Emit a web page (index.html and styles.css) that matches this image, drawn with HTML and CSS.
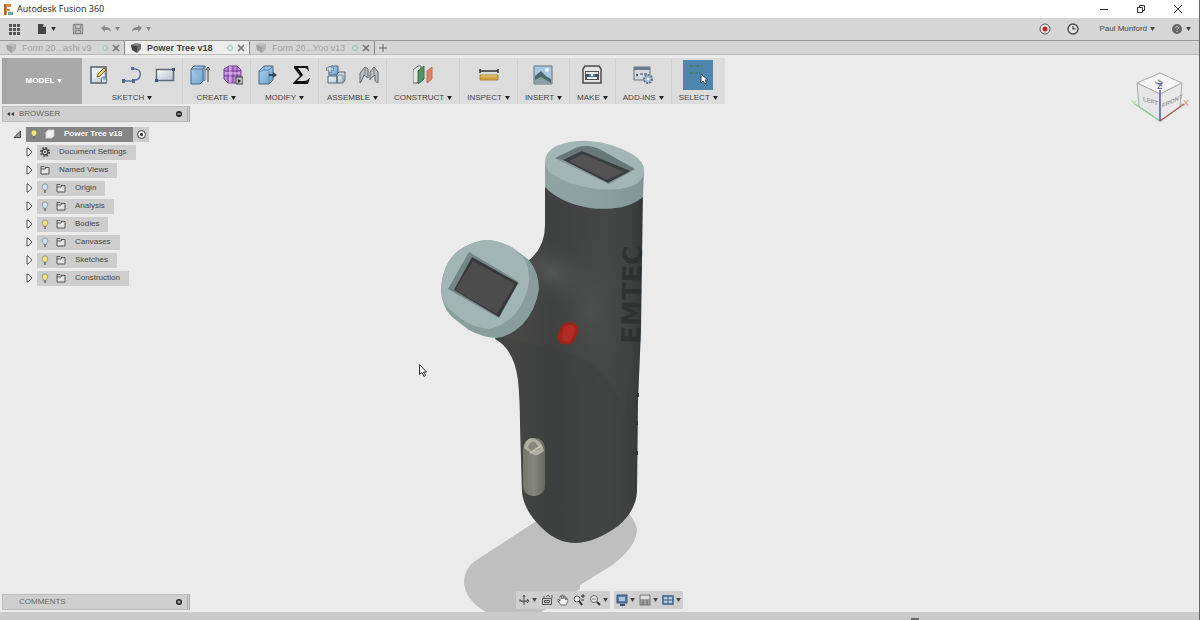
FILE: index.html
```html
<!DOCTYPE html>
<html lang="en">
<head>
    <meta charset="UTF-8">
    <meta name="viewport" content="width=device-width, initial-scale=1.0">
    <title>Autodesk Fusion 360</title>
    <link rel="stylesheet" href="styles.css">
</head>
<body>
    <!-- Shared icons -->
    <svg class="sprite" aria-hidden="true">
        <defs>
            <linearGradient id="blueFace" x1="0" y1="0" x2="1" y2="1">
                <stop offset="0" stop-color="#b3d3ee"/>
                <stop offset="1" stop-color="#6c9fcd"/>
            </linearGradient>
            <linearGradient id="paleFace" x1="0" y1="0" x2="1" y2="1">
                <stop offset="0" stop-color="#fafcfd"/>
                <stop offset="1" stop-color="#b4c0cb"/>
            </linearGradient>
        </defs>
        <symbol id="caret" viewBox="0 0 6 5"><path d="M0 0h6L3 5z" fill="currentColor"/></symbol>
        <symbol id="doc-cube" viewBox="0 0 12 12">
            <path d="M1 3l5-2 5 1v5L7 11 2 8z" fill="currentColor"/>
            <path d="M1 3l6 1 4-2-5-1z" fill="#fff" opacity=".35"/>
            <path d="M7 4v7l4-4V2z" fill="#fff" opacity=".2"/>
        </symbol>
        <symbol id="close" viewBox="0 0 8 8"><path d="M1 1l6 6M7 1L1 7" stroke="currentColor" stroke-width="1.700"/></symbol>
        <symbol id="arrow" viewBox="0 0 12 10"><path d="M1 4l4-3v2c4 0 6 2 6 5-1-2-3-2-6-2v2z" fill="currentColor"/></symbol>
        <symbol id="expander" viewBox="0 0 8 10"><path d="M2 1h1l4 4-4 4H2z" fill="#f6f6f6" stroke="#555"/></symbol>
        <symbol id="bulb" viewBox="1 0 8 11">
            <path d="M5 1a3 3 0 0 0-3 3c0 2 1 2 1.500 4h3C7 6 8 6 8 4a3 3 0 0 0-3-3z" fill="currentColor" stroke="#777" stroke-width=".7"/>
            <path d="M4 8.500h2M4 10h2" stroke="#666" stroke-width="1.200"/>
        </symbol>
        <symbol id="folder" viewBox="1 1 9 10"><path d="M1.500 10v-7.500h3l1 1h4V10zM1.500 5h4l1-1.500" fill="#e4e4e4" stroke="#555"/></symbol>
        <symbol id="pin" viewBox="0 0 8 8"><circle cx="4" cy="4" r="3" fill="#222"/><path d="M2.500 4h3" stroke="#ddd" stroke-width="1.200"/></symbol>
    </svg>

    <header class="titlebar">
        <svg class="logo" viewBox="0 0 12 13"><path d="M2 1h7v3H5v2h3v2H5v4H2z" fill="#e38b3c"/><path d="M2 1v11h2V1z" fill="#a9672e"/><path d="M6 9h5v3H6z" fill="#62a2ad"/></svg>
        <h1>Autodesk Fusion 360</h1>
        <div class="window-buttons">
            <button type="button" aria-label="Minimize"><svg viewBox="0 0 10 10"><path d="M1 5.500h8" stroke="#333"/></svg></button>
            <button type="button" aria-label="Restore"><svg viewBox="0 0 10 10"><path d="M1.500 3.500h5v5h-5zM3.500 3V1.500h5v5H7" fill="none" stroke="#333"/></svg></button>
            <button type="button" aria-label="Close"><svg viewBox="0 0 10 10"><path d="M1 1l8 8M9 1L1 9" stroke="#333"/></svg></button>
        </div>
    </header>

    <div class="quickbar">
        <button type="button" class="data-panel" aria-label="Data panel"><svg class="icon-12" viewBox="0 0 12 12"><path d="M1 1h3v3H1zM5 1h3v3H5zM9 1h3v3H9zM1 5h3v3H1zM5 5h3v3H5zM9 5h3v3H9zM1 9h3v3H1zM5 9h3v3H5zM9 9h3v3H9z" fill="#555"/></svg></button>
        <button type="button" class="file" aria-label="File"><svg class="icon-12" viewBox="0 0 12 12"><path d="M2 1h5l3 3v7H2z" fill="#444"/><path d="M7 1v3h3" fill="#bbb"/></svg><svg class="caret"><use href="#caret"/></svg></button>
        <button type="button" class="save" aria-label="Save"><svg class="icon-12" viewBox="0 0 12 12"><path d="M1.500 1.500h9v9h-9zM3.500 1.500v4h5v-4M3.500 10.500v-3h5v3" fill="none" stroke="#888" stroke-width="1.300"/></svg></button>
        <button type="button" class="undo" aria-label="Undo"><svg class="icon-12"><use href="#arrow"/></svg><svg class="caret"><use href="#caret"/></svg></button>
        <button type="button" class="redo" aria-label="Redo"><svg class="icon-12 flip"><use href="#arrow"/></svg><svg class="caret"><use href="#caret"/></svg></button>
        <div class="account">
            <button type="button" aria-label="Record"><svg class="icon-12" viewBox="0 0 12 12"><circle cx="6" cy="6" r="5" fill="#f4e6e4" stroke="#555"/><circle cx="6" cy="6" r="2.500" fill="#b0292b"/></svg></button>
            <button type="button" aria-label="Job status"><svg class="icon-12" viewBox="0 0 12 12"><circle cx="6" cy="6" r="5" fill="#e2e2e2" stroke="#444" stroke-width="1.300"/><path d="M6 3v3h3" fill="none" stroke="#444" stroke-width="1.200"/></svg></button>
            <button type="button" class="user">Paul Munford <svg class="caret"><use href="#caret"/></svg></button>
            <button type="button" aria-label="Help"><svg class="icon-12" viewBox="0 0 12 12"><circle cx="6" cy="6" r="5" fill="#666"/><path d="M4.500 5c0-2 3-2 3 0 0 1-1.500 1-1.500 2M6 8v1" fill="none" stroke="#ddd"/></svg><svg class="caret"><use href="#caret"/></svg></button>
        </div>
    </div>

    <nav class="tabs">
        <div class="tab">
            <svg class="icon-12"><use href="#doc-cube"/></svg>
            <a href="#">Form 20...ashi v9</a>
            <span class="status"></span>
            <button type="button" aria-label="Close tab"><svg class="icon-8"><use href="#close"/></svg></button>
        </div>
        <div class="tab active">
            <svg class="icon-12"><use href="#doc-cube"/></svg>
            <a href="#">Power Tree v18</a>
            <span class="status"></span>
            <button type="button" aria-label="Close tab"><svg class="icon-8"><use href="#close"/></svg></button>
        </div>
        <div class="tab">
            <svg class="icon-12"><use href="#doc-cube"/></svg>
            <a href="#">Form 20...Yoo v13</a>
            <span class="status"></span>
            <button type="button" aria-label="Close tab"><svg class="icon-8"><use href="#close"/></svg></button>
        </div>
        <button type="button" class="new-tab" aria-label="New tab"><svg class="icon-8" viewBox="0 0 8 8"><path d="M4 0v8M0 4h8" stroke="#666"/></svg></button>
    </nav>

    <main class="workspace">
        <!-- Model view -->
        <svg class="model" viewBox="420 130 360 482" role="img" aria-label="Power Tree model">
            <defs>
                <linearGradient id="body" x1="520" y1="0" x2="643" y2="0" gradientUnits="userSpaceOnUse">
                    <stop offset="0" stop-color="#464745"/>
                    <stop offset=".25" stop-color="#3f4140"/>
                    <stop offset=".7" stop-color="#454746"/>
                    <stop offset=".9" stop-color="#404241"/>
                    <stop offset="1" stop-color="#343636"/>
                </linearGradient>
                <linearGradient id="capSide" x1="0" y1="0" x2="1" y2="0">
                    <stop offset="0" stop-color="#8fa3a3"/>
                    <stop offset=".6" stop-color="#8ca09f"/>
                    <stop offset="1" stop-color="#809494"/>
                </linearGradient>
                <linearGradient id="plug" x1="0" y1="0" x2="1" y2="0">
                    <stop offset="0" stop-color="#75776d"/>
                    <stop offset=".5" stop-color="#85877c"/>
                    <stop offset="1" stop-color="#67695f"/>
                </linearGradient>
                <radialGradient id="sheen">
                    <stop offset="0" stop-color="#636564" stop-opacity=".6"/>
                    <stop offset="1" stop-color="#4a4c4b" stop-opacity="0"/>
                </radialGradient>
                <clipPath id="bodyClip"><path d="M545 183V225Q545 248 528 261L495 339Q514 349 518 380Q520 400 520 425L522 492Q524 511 542 528Q557 543 576 543Q596 542 618 526Q636 511 637 491L638 400L641 330L643 190Z"/></clipPath>
            </defs>
            <path d="M535 522L475 561Q464 569 464 582Q465 600 486 612H541L580 589V585L611 566Q637 547 637 529Q634 518 627 512Z" fill="#bfbfbf"/>
            <g clip-path="url(#bodyClip)">
                <path d="M490 180h160v370H490z" fill="url(#body)"/>
                <ellipse cx="552" cy="272" rx="48" ry="30" fill="url(#sheen)" transform="rotate(25 552 272)"/>
                <ellipse cx="590" cy="310" rx="42" ry="80" fill="url(#sheen)" opacity=".5"/>
                <path d="M495 335Q540 345 575 355Q615 372 625 420Q632 340 641 320V560H510Z" fill="#393b3a" opacity=".2"/>
            </g>
            <path d="M638 393v4M637 421v4M637 451v4" stroke="#333" stroke-width="2"/>
            <text class="engraving" transform="translate(640 344) rotate(-89)">EMTEC</text>
            <!-- Top socket -->
            <path d="M545 161V187Q560 203 590 208Q625 212 643 197L644 169Z" fill="url(#capSide)"/>
            <path d="M545 162Q545 152 556 146Q571 140 590 141Q613 143 632 154Q645 162 644 171Q643 182 632 186Q615 192 590 188Q568 184 553 175Q545 169 545 162Z" fill="#a2b6b5"/>
            <path d="M555 158L578 147Q591 144 603 151L635 169L609 184Z" fill="#687777"/>
            <path d="M563 160L582 151L630 171L608 183Z" fill="#393d3d"/>
            <path d="M569 161L583 154L624 172L607 180Z" fill="#545252"/>
            <path d="M555 158L563 160L608 183L635 169L609 184Z" fill="#85999a"/>
            <!-- Side socket -->
            <path d="M441 288Q443 263 458 251Q472 241 487 240Q501 241 513 248L529 260Q539 273 539 289Q536 310 522 325Q509 337 496 338Q482 337 469 330L452 317Q441 306 441 288Z" fill="#899d9d"/>
            <path d="M441 288Q443 263 458 251Q472 241 487 240Q501 241 513 248L522 256Q530 266 529 282Q526 300 516 313Q503 327 488 329Q473 327 461 319L449 309Q441 301 441 288Z" fill="#a1b5b4"/>
            <path d="M469 252L519 282L499 318L448 289Z" fill="#738584"/>
            <path d="M472 257L518 283L499 317L454 290Z" fill="#343838"/>
            <path d="M473 261L515 284L497 314L455 290Z" fill="#4d4c4c"/>
            <!-- Button and plug -->
            <path d="M562 325Q567 321 574 323Q579 326 578 333L573 342Q567 347 560 343L557 338Z" fill="#9f2119"/>
            <path d="M563 328Q568 324 572 325Q576 327 574 335L570 341Q565 343 562 340Z" fill="#b32b22"/>
            <rect x="523" y="438" width="22" height="58" rx="10" fill="url(#plug)"/>
            <path d="M524 448Q525 439 532 438Q543 441 544 451Q538 456 534 455Z" fill="#b0b0a0"/>
            <path d="M528 447Q530 441 535 442L540 449L532 452Z" fill="#85867a"/>
            <path d="M530 453L541 446" stroke="#c6c6b7" stroke-width="2"/>
        </svg>

        <section class="toolbar" aria-label="Toolbar">
            <button type="button" class="mode">MODEL <svg class="caret"><use href="#caret"/></svg></button>
            <div class="group">
                <div class="tools">
                    <button type="button" aria-label="Create sketch"><svg viewBox="0 0 20 20"><path d="M2 2h15v16H2z" fill="url(#paleFace)" stroke="#54606a" stroke-width="1.500"/><path d="M4 4h11v9H4z" fill="#e9edf0"/><path d="M8 12l1-3 6-6 2 2-6 6z" fill="#ead566" stroke="#716223"/><circle cx="15" cy="15" r="3" fill="#dde4ec" stroke="#5c748e"/><path d="M14 14h3" stroke="#5c748e"/></svg></button>
                    <button type="button" aria-label="Line"><svg viewBox="0 0 20 20"><path d="M2 16h9M9 4h4c7 0 7 10 0 11" fill="none" stroke="#5776a0" stroke-width="1.500"/><path d="M0 14h3v4H0zM10 14h3v4h-3zM9 2h3v3H9z" fill="#516697"/></svg></button>
                    <button type="button" aria-label="Rectangle"><svg viewBox="0 0 20 20"><path d="M1.500 4.500h17v11h-17z" fill="url(#paleFace)" stroke="#616b78" stroke-width="1.500"/><path d="M0 14h3v3H0zM17 3h3v3h-3z" fill="#405384"/></svg></button>
                </div>
                <button type="button" class="menu">SKETCH<svg class="caret"><use href="#caret"/></svg></button>
            </div>
            <div class="group">
                <div class="tools">
                    <button type="button" aria-label="Extrude"><svg viewBox="0 0 20 20"><path d="M1 4l3-3h11l-2 3v12l-3 3H1z" fill="url(#blueFace)" stroke="#41698e"/><path d="M1 4h12v12M13 4l2-3v14l-2 1" fill="#87afd3" fill-opacity=".4" stroke="#527ba2"/><path d="M18 17V4M16 5l2-3 2 3" fill="none" stroke="#444"/></svg></button>
                    <button type="button" aria-label="Create form"><svg viewBox="0 0 20 20"><path d="M1 4l5-3h8l4 4v8l-5 5H5l-4-4z" fill="#c18adc" stroke="#71428f"/><path d="M1 6h17M1 11h17M5 2v15M10 1v17M14 2v15" stroke="#71428f"/><path d="M2 8h15M7 1v17" stroke="#e1b6f1"/><path d="M13 12h7v7h-7z" fill="#bbb" stroke="#444"/><path d="M15 14l3 2-3 2z" fill="#222"/></svg></button>
                </div>
                <button type="button" class="menu">CREATE<svg class="caret"><use href="#caret"/></svg></button>
            </div>
            <div class="group">
                <div class="tools">
                    <button type="button" aria-label="Press pull"><svg viewBox="0 0 20 20"><path d="M1 6l5-5h9v14l-4 4H1z" fill="url(#blueFace)" stroke="#41698e"/><path d="M6 1v4l-5 2M6 5h5l4-4M11 6v12" fill="none" stroke="#5c88b0"/><path d="M11 9h4V7l4 3-4 3v-2h-4z" fill="#354451"/></svg></button>
                    <button type="button" aria-label="Parameters"><svg viewBox="0 0 20 20"><path d="M3 1h14l1 5h-1c-1-3-2-3-5-3H7l5 7-6 6h7c3 0 4-1 5-3h1l-2 6H2v-1l7-7-6-8z" fill="#111"/></svg></button>
                </div>
                <button type="button" class="menu">MODIFY<svg class="caret"><use href="#caret"/></svg></button>
            </div>
            <div class="group">
                <div class="tools">
                    <button type="button" aria-label="New component"><svg viewBox="0 0 20 20"><path d="M3 3l2-2h7v9H3z" fill="url(#blueFace)" stroke="#4c6780"/><path d="M2 11h9v7H2zM11 9l2-2h6v8l-2 3h-6z" fill="url(#paleFace)" stroke="#536779"/><path d="M11 10h6v8" fill="none" stroke="#768a9a"/><path d="M4 1v7M0 4h8" stroke="#6b8299" stroke-width="3"/><path d="M4 2v5M1 4h6" stroke="#fff"/></svg></button>
                    <button type="button" aria-label="Joint"><svg viewBox="0 0 20 20"><path d="M1 8l5-6 3 2v9l-4-3-3 7-1 1zM11 7l4-5 4 5v11l-3-2v-6l-4 3-1 2z" fill="#bbbec1" stroke="#66696c"/><path d="M6 3v7M15 3v7M9 11l2-1" fill="none" stroke="#82868a"/></svg></button>
                </div>
                <button type="button" class="menu">ASSEMBLE<svg class="caret"><use href="#caret"/></svg></button>
            </div>
            <div class="group">
                <div class="tools">
                    <button type="button" aria-label="Offset plane"><svg viewBox="0 0 20 20"><path d="M0 5l5-4h3v13l-4 4H0z" fill="#e7ece9" stroke="#5f6863"/><path d="M5 6l6-5v13l-6 5z" fill="#559462" stroke="#356c43"/><path d="M14 6l5-4v12l-5 4z" fill="#dc8164" stroke="#c37059"/></svg></button>
                </div>
                <button type="button" class="menu">CONSTRUCT<svg class="caret"><use href="#caret"/></svg></button>
            </div>
            <div class="group">
                <div class="tools">
                    <button type="button" aria-label="Measure"><svg viewBox="0 0 20 20"><path d="M1 6h18M1 4v4M19 4v4" stroke="#333" stroke-width="1.500"/><path d="M1 10h18v5H1z" fill="#d3a544" stroke="#a58335"/><path d="M2 11h16" stroke="#efd27f"/></svg></button>
                </div>
                <button type="button" class="menu">INSPECT<svg class="caret"><use href="#caret"/></svg></button>
            </div>
            <div class="group">
                <div class="tools">
                    <button type="button" aria-label="Insert image"><svg viewBox="0 0 20 20"><path d="M1 1h18v18H1z" fill="#a9c8df" stroke="#67757d"/><path d="M2 11l6-5 5 5 5 3v4H2z" fill="#4d6772"/><path d="M2 15l6-3 10 6H2z" fill="#89a0a5"/><circle cx="14" cy="5" r="2" fill="#edf4f8"/></svg></button>
                </div>
                <button type="button" class="menu">INSERT<svg class="caret"><use href="#caret"/></svg></button>
            </div>
            <div class="group">
                <div class="tools">
                    <button type="button" aria-label="3D print"><svg viewBox="0 0 20 20"><path d="M3 1h14l2 3v14H1V4z" fill="#e3e3e3" stroke="#4b4b4b" stroke-width="1.500"/><path d="M3 6h14v9H3z" fill="#4c5359"/><path d="M4 8h12M5 13h10" stroke="#e6e9ec" stroke-width="2"/><path d="M7 9h6v3H7z" fill="#557ea9"/><path d="M9 9h2v2H9z" fill="#fafafa"/></svg></button>
                </div>
                <button type="button" class="menu">MAKE<svg class="caret"><use href="#caret"/></svg></button>
            </div>
            <div class="group">
                <div class="tools">
                    <button type="button" aria-label="Scripts and add-ins"><svg viewBox="0 0 20 20"><path d="M1 2h16v13H1z" fill="#d6dade" stroke="#606e80"/><path d="M1 2h16v3H1z" fill="#6b7b90"/><path d="M3 9l2 1-2 1M7 9h3M11 9h3" fill="none" stroke="#354051"/><circle cx="15" cy="14" r="4" fill="#b6c8db" stroke="#5c7692" stroke-width="2" stroke-dasharray="2 1"/><circle cx="15" cy="14" r="3" fill="#9bb3cc"/><circle cx="15" cy="14" r="1.500" fill="#eef2f5"/></svg></button>
                </div>
                <button type="button" class="menu">ADD-INS<svg class="caret"><use href="#caret"/></svg></button>
            </div>
            <div class="group">
                <div class="tools">
                    <button type="button" class="selected" aria-label="Select"><svg viewBox="0 0 30 30"><path d="M6 6h14M6 13h13" stroke="#457d80" stroke-width="2" stroke-dasharray="5 1"/><path d="M18 14v9l2-2 2 3 2-1-2-3h3z" fill="#fff" stroke="#27485f"/></svg></button>
                </div>
                <button type="button" class="menu">SELECT<svg class="caret"><use href="#caret"/></svg></button>
            </div>
        </section>

        <aside class="sidebar">
            <div class="panel-head">
                <button type="button" aria-label="Collapse browser"><svg class="icon-8" viewBox="0 0 8 8"><path d="M4 2v4L1 4zM8 2v4L5 4z" fill="#333"/></svg></button>
                <h2>BROWSER</h2>
                <button type="button" aria-label="Hide browser"><svg class="icon-8"><use href="#pin"/></svg></button>
            </div>
            <ul class="tree">
                <li class="root">
                    <button type="button" aria-label="Collapse"><svg class="icon-8" viewBox="0 0 8 8"><path d="M7.500 1v6.500H1z" fill="#999" stroke="#444"/></svg></button>
                    <span class="node">
                        <svg class="icon-10 on"><use href="#bulb"/></svg>
                        <svg class="icon-10" viewBox="0 0 10 10"><path d="M1 3l2-2h6v6L7 9H1z" fill="#f2f2f2" stroke="#ccc"/></svg>
                        Power Tree v18
                    </span>
                    <label class="activate"><input type="radio" name="component" aria-label="Activate Power Tree v18" checked></label>
                </li>
                <li>
                    <button type="button" aria-label="Expand"><svg class="icon-10"><use href="#expander"/></svg></button>
                    <span class="node single"><svg class="icon-10" viewBox="0 0 10 10"><circle cx="5" cy="5" r="4" fill="none" stroke="#444" stroke-width="2" stroke-dasharray="1.600 1.540"/><circle cx="5" cy="5" r="2.800" fill="#ccc" stroke="#444" stroke-width="1.200"/><circle cx="5" cy="5" r="1" fill="#444"/></svg>Document Settings</span>
                </li>
                <li>
                    <button type="button" aria-label="Expand"><svg class="icon-10"><use href="#expander"/></svg></button>
                    <span class="node single"><svg class="icon-10"><use href="#folder"/></svg>Named Views</span>
                </li>
                <li>
                    <button type="button" aria-label="Expand"><svg class="icon-10"><use href="#expander"/></svg></button>
                    <span class="node"><svg class="icon-10 off"><use href="#bulb"/></svg><svg class="icon-10"><use href="#folder"/></svg>Origin</span>
                </li>
                <li>
                    <button type="button" aria-label="Expand"><svg class="icon-10"><use href="#expander"/></svg></button>
                    <span class="node"><svg class="icon-10 off"><use href="#bulb"/></svg><svg class="icon-10"><use href="#folder"/></svg>Analysis</span>
                </li>
                <li>
                    <button type="button" aria-label="Expand"><svg class="icon-10"><use href="#expander"/></svg></button>
                    <span class="node"><svg class="icon-10 on"><use href="#bulb"/></svg><svg class="icon-10"><use href="#folder"/></svg>Bodies</span>
                </li>
                <li>
                    <button type="button" aria-label="Expand"><svg class="icon-10"><use href="#expander"/></svg></button>
                    <span class="node"><svg class="icon-10 off"><use href="#bulb"/></svg><svg class="icon-10"><use href="#folder"/></svg>Canvases</span>
                </li>
                <li>
                    <button type="button" aria-label="Expand"><svg class="icon-10"><use href="#expander"/></svg></button>
                    <span class="node"><svg class="icon-10 on"><use href="#bulb"/></svg><svg class="icon-10"><use href="#folder"/></svg>Sketches</span>
                </li>
                <li>
                    <button type="button" aria-label="Expand"><svg class="icon-10"><use href="#expander"/></svg></button>
                    <span class="node"><svg class="icon-10 on"><use href="#bulb"/></svg><svg class="icon-10"><use href="#folder"/></svg>Construction</span>
                </li>
            </ul>
            <div class="panel-head comments">
                <h2>COMMENTS</h2>
                <button type="button" aria-label="Show comments"><svg class="icon-8" viewBox="0 0 8 8"><circle cx="4" cy="4" r="3" fill="#222"/><path d="M2.500 4h3M4 2.500v3" stroke="#ddd"/></svg></button>
            </div>
        </aside>

        <!-- View cube -->
        <svg class="view-cube" viewBox="0 0 60 60">
            <path d="M9 38l22 19 23-19-10-4z" fill="#ccc" opacity=".5"/>
            <path d="M8 17l23-10 22 10-22 11z" fill="#f6f6f6" stroke="#aaa"/>
            <path d="M8 17l23 11v27L10 41z" fill="#e5e5e5" stroke="#aaa"/>
            <path d="M53 17L31 28v27l20-14z" fill="#e9e9e9" stroke="#aaa"/>
            <path d="M31 55L6 38" stroke="#8ecb92" stroke-width="1.500"/>
            <path d="M31 55L55 38" stroke="#b85c5c" stroke-width="1.500"/>
            <path d="M31 55V24" stroke="#575fc4" stroke-width="1.500"/>
            <text class="face" transform="translate(14 35) skewY(16)">LEFT</text>
            <text class="face" transform="translate(33 42) skewY(-25)">FRONT</text>
            <path d="M26 16l7 4M29 14l5 3" stroke="#999" stroke-width="1.500"/>
            <text class="axis z" x="28" y="23">Z</text>
            <text class="axis x" x="54" y="40">X</text>
            <text class="axis y" x="2" y="40">Y</text>
        </svg>

        <svg class="cursor" viewBox="0 0 8 13"><path d="M.5.500v10l2.500-2 2 4 1.500-1-2-3.500h3z" fill="#fff" stroke="#333"/></svg>

        <!-- Navigation bar -->
        <div class="navbar">
            <div class="nav-set">
                <button type="button" aria-label="Orbit"><svg class="icon-12" viewBox="0 0 12 12"><path d="M6 1v10M5 3l1-2 1 2M2 5c0 4 8 4 8 0M1 7h10M9 5l2 2-2 2" fill="none" stroke="#555"/></svg><svg class="caret"><use href="#caret"/></svg></button>
                <button type="button" aria-label="Look at"><svg class="icon-12" viewBox="0 0 12 12"><path d="M1.500 4.500h9v6h-9zM3.500 6.500h5v2h-5zM3 4V2M5 3l2-2 2 2M11 1v3" fill="none" stroke="#555"/></svg></button>
                <button type="button" aria-label="Pan"><svg class="icon-12" viewBox="0 0 12 12"><path d="M4 11L1 7V5l2 2V2h1l1 3V1h1l1 4V2h1l1 4V4h1l1 3-2 4z" fill="#f4f4f4" stroke="#555" stroke-width=".8"/></svg></button>
                <button type="button" aria-label="Zoom"><svg class="icon-12" viewBox="0 0 12 12"><circle cx="4" cy="5" r="3" fill="#eee" stroke="#666"/><path d="M6 7l3 4" stroke="#333" stroke-width="2"/><path d="M8 2h4M10 0v4M8 6h3" stroke="#333"/></svg></button>
                <button type="button" aria-label="Fit"><svg class="icon-12" viewBox="0 0 12 12"><circle cx="5" cy="5" r="3.500" fill="#eee" stroke="#666"/><path d="M3 5h4" stroke="#777"/><path d="M8 8l3 3" stroke="#333" stroke-width="2"/></svg><svg class="caret"><use href="#caret"/></svg></button>
            </div>
            <div class="nav-set">
                <button type="button" aria-label="Display settings"><svg class="icon-12" viewBox="0 0 12 12"><path d="M1 1h10v8H1z" fill="#557da7" stroke="#39536f"/><path d="M3 3h6v4H3z" fill="#a6c5df"/><path d="M4 11h5" stroke="#39536f" stroke-width="2"/></svg><svg class="caret"><use href="#caret"/></svg></button>
                <button type="button" aria-label="Grid and snaps"><svg class="icon-12" viewBox="0 0 12 12"><path d="M1 1h10v10H1z" fill="#ddd" stroke="#777"/><path d="M1 6h10M1 8h10M1 10h10M4 6v5M8 6v5" stroke="#666"/></svg><svg class="caret"><use href="#caret"/></svg></button>
                <button type="button" aria-label="Viewports"><svg class="icon-12" viewBox="0 0 12 12"><path d="M1 2h10v8H1z" fill="#b1cae3" stroke="#3e5f85" stroke-width="1.500"/><path d="M6 2v8M1 6h10" stroke="#3e5f85"/></svg><svg class="caret"><use href="#caret"/></svg></button>
            </div>
        </div>
    </main>
    <footer class="timeline"><span class="handle"></span></footer>
</body>
</html>
```
FILE: styles.css
```css
* {
    box-sizing: border-box;
}
body {
    display: flex;
    flex-direction: column;
    min-height: 100vh;
    margin: 0;
    border-right: 1px solid #666;
    background: #ebebeb;
    color: #444;
    font-family: "Liberation Sans", Arial, sans-serif;
    font-size: 8px;
    line-height: 12px;
}
h1, h2, ul {
    margin: 0;
    padding: 0;
    font-weight: normal;
}
button {
    display: flex;
    align-items: center;
    padding: 0;
    border: none;
    background: none;
    color: inherit;
    font: inherit;
    white-space: nowrap;
}
svg {
    display: block;
    flex: none;
}
.sprite {
    position: absolute;
    width: 0;
    height: 0;
}
.icon-8 {
    width: 8px;
    height: 8px;
}
.icon-10 {
    width: 10px;
    height: 10px;
}
.icon-12 {
    width: 12px;
    height: 12px;
}
.caret {
    width: 5px;
    height: 4px;
    margin-left: 3px;
}
.flip {
    transform: scaleX(-1);
}

/* Title bar */
.titlebar {
    display: flex;
    align-items: center;
    height: 18px;
    padding: 0 16px 0 2px;
    background: #fff;
}
.titlebar h1 {
    margin-left: 3px;
    color: #222;
    font-family: "Open Sans", sans-serif;
    font-size: 9px;
}
.logo {
    width: 12px;
    height: 13px;
}
.window-buttons {
    display: flex;
    gap: 27px;
    margin-left: auto;
}
.window-buttons svg {
    width: 10px;
    height: 10px;
}

/* Quick access bar */
.quickbar {
    display: flex;
    align-items: center;
    gap: 16px;
    height: 23px;
    padding: 0 8px;
    border-bottom: 1px solid #999;
    background: #d6d6d6;
}
.file {
    color: #333;
}
.undo, .redo {
    color: #888;
}
.redo {
    margin-left: -5px;
}
.account {
    display: flex;
    gap: 16px;
    margin-left: auto;
}
.user {
    margin-left: 4px;
}

/* Document tabs */
.tabs {
    display: flex;
    height: 14px;
    border-bottom: 1px solid #bbb;
    background: #d5d5d5;
}
.tab {
    display: flex;
    align-items: center;
    width: 125px;
    padding: 0 4px 0 5px;
    border-right: 1px solid #888;
    color: #a2a2a2;
    font-size: 9px;
}
.tab a {
    margin-left: 5px;
    color: inherit;
    text-decoration: none;
    white-space: nowrap;
}
.tab .icon-8 {
    color: #777;
}
.tab.active {
    background: #ededed;
    color: #444;
    font-weight: bold;
}
.tab > button {
    margin-left: 4px;
}
.status {
    width: 6px;
    height: 6px;
    margin-left: auto;
    border: 1px solid #91c4b7;
    border-radius: 50%;
}
.new-tab {
    padding: 0 4px;
}

/* Workspace */
.workspace {
    position: relative;
    display: flex;
    flex: 1;
    flex-direction: column;
    align-items: flex-start;
    padding: 3px 2px 2px;
}
.model {
    position: absolute;
    bottom: 0;
    left: 50%;
    width: 360px;
    height: 482px;
    margin-left: -180px;
}
.engraving {
    fill: #2c2e2e;
    opacity: .8;
    font-family: "DejaVu Sans", sans-serif;
    font-size: 26px;
    font-weight: bold;
}
.toolbar {
    position: relative;
    display: flex;
    height: 46px;
    background: #dcdcdc;
}
.mode {
    justify-content: center;
    width: 80px;
    border-left: 4px double #999;
    background: #a9a9a9;
    color: #fff;
    font-weight: bold;
}
.group {
    display: flex;
    flex-direction: column;
    align-items: center;
    justify-content: space-between;
    padding: 2px 7px 0;
    border-right: 1px solid #cfcfcf;
}
.group:last-child {
    border-right: none;
}
.tools {
    display: flex;
    align-items: center;
    gap: 13px;
    height: 30px;
}
.tools svg {
    width: 20px;
    height: 20px;
}
.tools .selected {
    background: #4e86ad;
}
.tools .selected svg {
    width: 30px;
    height: 30px;
}
.menu .caret {
    color: #222;
}

/* Browser */
.sidebar {
    position: relative;
    display: flex;
    flex: 1;
    flex-direction: column;
    width: 188px;
    padding-top: 2px;
}
.panel-head {
    display: flex;
    align-items: center;
    height: 16px;
    padding: 0 4px 0 3px;
    border: 1px solid #bdbdbd;
    border-right: 3px double #aaa;
    background: #cfcfcf;
}
.panel-head h2 {
    margin: 0 auto 0 5px;
    color: #666;
    font-size: 8px;
}
.comments {
    margin-top: auto;
}
.panel-head.comments h2 {
    margin-left: 13px;
}
.tree {
    padding-top: 3px;
    list-style: none;
}
.tree li {
    display: flex;
    align-items: center;
    gap: 3px;
    height: 18px;
    padding-left: 22px;
}
.tree .root {
    gap: 0;
    padding-left: 11px;
}
.node {
    display: flex;
    align-items: center;
    gap: 6px;
    height: 15px;
    padding: 0 9px 0 3px;
    background: #cdcdcd;
    white-space: nowrap;
}
.node .icon-10:last-of-type {
    margin-right: 3px;
}
.root .node {
    margin-left: 5px;
    padding-right: 11px;
    background: #858585;
    color: #fff;
    font-weight: bold;
}
.on {
    color: #f3e873;
}
.off {
    color: #cfe2f5;
}
.activate {
    display: flex;
    align-items: center;
    height: 15px;
    padding: 0 3px 0 4px;
    background: #cdcdcd;
}
.activate input {
    width: 9px;
    height: 9px;
    margin: 0;
    border: 1px solid #444;
    border-radius: 50%;
    background: radial-gradient(#333 0 1px, #eee 2px);
    appearance: none;
}

/* View cube and cursor */
.view-cube {
    position: absolute;
    top: 11px;
    right: 10px;
    width: 60px;
    height: 60px;
}
.face {
    fill: #999;
    font-size: 6px;
    font-weight: bold;
}
.axis {
    font-size: 9px;
}
.z {
    fill: #4e58bd;
}
.x {
    fill: #e08a8a;
}
.y {
    fill: #a6dda9;
}
.cursor {
    position: absolute;
    top: 309px;
    left: 419px;
    width: 8px;
    height: 13px;
}

/* Navigation bar */
.navbar {
    position: absolute;
    right: 0;
    bottom: 3px;
    left: 0;
    display: flex;
    justify-content: center;
    gap: 4px;
}
.nav-set {
    display: flex;
    align-items: center;
    gap: 4px;
    height: 18px;
    padding: 0 2px;
    background: #cfcfcf;
}
.navbar .caret {
    margin-left: 2px;
}

.timeline {
    display: flex;
    align-items: flex-end;
    height: 8px;
    background: #cacaca;
}
.handle {
    width: 8px;
    height: 2px;
    margin-left: 76%;
    background: #666;
}
```
